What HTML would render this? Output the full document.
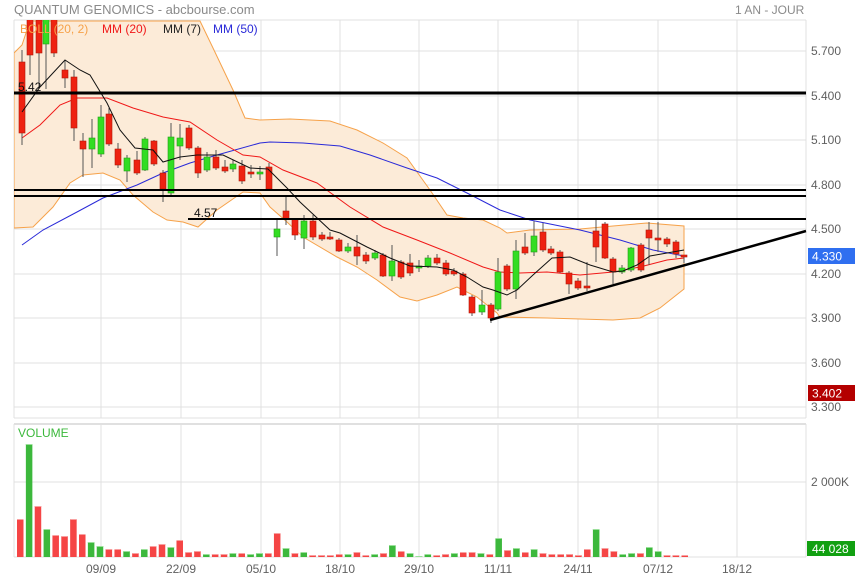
<!DOCTYPE html>
<html><head><meta charset="utf-8"><style>
html,body{margin:0;padding:0;background:#fff;}
body{width:855px;height:579px;overflow:hidden;font-family:"Liberation Sans",sans-serif;}
svg text{font-family:"Liberation Sans",sans-serif;}
</style></head><body>
<svg id="s" width="855" height="579" xmlns="http://www.w3.org/2000/svg">
<defs><clipPath id="cp"><rect x="14" y="20" width="792" height="398"/></clipPath></defs>
<text x="14" y="14" font-size="13" fill="#8a8a8a">QUANTUM GENOMICS - abcbourse.com</text>
<text x="735" y="14" font-size="12" fill="#8a8a8a">1 AN - JOUR</text>
<g id="grid" stroke="#e0e0e0" stroke-width="1"></g>
<g clip-path="url(#cp)">
<polygon id="band" fill="#fcebd8" stroke="#f6a24a" stroke-width="1"/>
<polyline id="m50" fill="none" stroke="#2a2ad8" stroke-width="1"/>
<polyline id="m20" fill="none" stroke="#f01818" stroke-width="1"/>
<g id="cand"></g>
<polyline id="m7" fill="none" stroke="#111" stroke-width="1"/>
</g>
<line x1="14" y1="93" x2="806" y2="93" stroke="#000" stroke-width="3"/>
<line x1="14" y1="190" x2="806" y2="190" stroke="#000" stroke-width="2"/>
<line x1="14" y1="196" x2="806" y2="196" stroke="#000" stroke-width="2"/>
<line x1="188" y1="219" x2="806" y2="219" stroke="#000" stroke-width="2"/>
<line x1="490" y1="320" x2="806" y2="231" stroke="#000" stroke-width="2.5"/>
<text x="18" y="91" font-size="12" fill="#111">5.42</text>
<text x="194" y="217" font-size="12" fill="#111">4.57</text>
<text x="20" y="33" font-size="12" fill="#f6a24a">BOLL (20, 2)</text>
<text x="102" y="33" font-size="12" fill="#f01818">MM (20)</text>
<text x="163" y="33" font-size="12" fill="#222">MM (7)</text>
<text x="213" y="33" font-size="12" fill="#2a2ad8">MM (50)</text>
<g id="ax" font-size="12" fill="#606060"></g>
<rect x="808" y="248" width="47" height="16" fill="#2f6ff0"/>
<text x="812" y="260.5" font-size="12" fill="#fff">4.330</text>
<rect x="808" y="385" width="47" height="16" fill="#b40000"/>
<text x="812" y="397.5" font-size="12" fill="#fff">3.402</text>
<g id="vol"></g>
<text x="18" y="437" font-size="12" fill="#3cb83c">VOLUME</text>
<text x="811" y="486" font-size="12" fill="#606060">2 000K</text>
<rect x="807" y="541" width="48" height="15" fill="#11a011"/>
<text x="812" y="553" font-size="12" fill="#fff">44 028</text>
<g id="dates" font-size="12" fill="#606060" text-anchor="middle"></g>
</svg>
<script>
var NS="http://www.w3.org/2000/svg";
function el(p,t,a,txt){var e=document.createElementNS(NS,t);for(var k in a)e.setAttribute(k,a[k]);if(txt)e.textContent=txt;document.getElementById(p).appendChild(e);return e;}
var vx=[14,101,181,261,340,419,498,578,658,737,806];
vx.forEach(function(x){el("grid","line",{x1:x,y1:20,x2:x,y2:418});el("grid","line",{x1:x,y1:424,x2:x,y2:557});});
var hy=[51,96,140,185,229,274,318,363,407],lab=["5.700","5.400","5.100","4.800","4.500","4.200","3.900","3.600","3.300"];
hy.forEach(function(y,i){el("grid","line",{x1:14,y1:y,x2:806,y2:y});el("ax","text",{x:811,y:y+4},lab[i]);});
el("grid","line",{x1:14,y1:20,x2:806,y2:20});el("grid","line",{x1:14,y1:418,x2:806,y2:418});
el("grid","line",{x1:14,y1:424,x2:806,y2:424,"stroke-width":2});el("grid","line",{x1:14,y1:482,x2:806,y2:482});el("grid","line",{x1:14,y1:557,x2:806,y2:557});
var dl=[[101,"09/09"],[181,"22/09"],[261,"05/10"],[340,"18/10"],[419,"29/10"],[498,"11/11"],[578,"24/11"],[658,"07/12"],[737,"18/12"]];
dl.forEach(function(d){el("dates","text",{x:d[0],y:573},d[1]);});
function pl(id,s){document.getElementById(id).setAttribute("points",s);}
var up="14,53 22,45 30,21 200,21 213,48 233,90 245,118 260,120 290,119 330,121 357,130 383,143 407,158 430,190 447,215 463,218 483,220 500,228 507,233 530,230 580,229 613,226 647,223 684,226";
var lo="684,289 660,308 640,318 613,320 547,318 500,317 497,313 477,297 457,287 437,295 417,301 400,297 377,280 357,267 337,257 303,237 287,222 270,207 260,193 243,192 217,210 198,227 183,222 167,220 153,212 133,195 120,180 103,173 83,175 70,183 53,207 33,227 14,228";
pl("band",up+" "+lo);
pl("m7","22,112 40,87 65,60 80,70 90,75 107,103 120,130 135,148 153,150 163,162 180,157 197,155 223,155 250,168 268,169 287,188 300,202 330,230 340,233 367,247 390,258 410,266 437,267 453,270 467,277 483,287 493,290 507,295 517,290 533,275 552,258 570,257 590,265 613,272 623,271 637,265 650,256 667,253 684,250");
pl("m20","22,138 40,125 60,105 77,98 107,98 133,108 163,117 190,122 217,140 243,155 260,157 283,170 317,183 350,207 383,227 417,240 450,253 483,267 500,272 520,273 547,272 580,275 613,272 640,267 667,260 684,258");
pl("m50","22,245 43,230 77,212 103,198 137,185 163,173 190,163 217,155 260,143 270,142 303,143 340,146 370,155 407,168 437,178 467,193 500,210 530,220 580,230 620,240 653,250 684,256");
// x, top, bot, wickTop, wickBot, color
var C=[[22,62,133,50,145,"r"],[30,10,55,0,75,"r"],[39,20,53,5,89,"r"],[46,10,44,0,89,"g"],[54,10,53,0,57,"r"],[65,70,78,60,88,"r"],[74,77,128,70,141,"r"],[83,141,149,133,177,"r"],[92,138,149,119,168,"g"],[101,117,154,105,157,"g"],[109,114,144,108,146,"r"],[118,149,165,143,168,"r"],[127,158,171,155,182,"g"],[137,160,173,151,175,"r"],[145,139,170,137,171,"g"],[154,141,164,140,166,"r"],[163,173,189,170,202,"r"],[171,137,193,123,195,"g"],[180,138,146,124,160,"g"],[189,128,148,125,150,"r"],[198,148,173,146,178,"r"],[207,157,170,152,172,"g"],[216,157,168,150,170,"r"],[225,167,171,160,173,"r"],[233,164,169,160,172,"g"],[242,166,181,160,184,"r"],[251,172,174,165,178,"r"],[260,172,174,166,180,"g"],[269,167,189,163,191,"r"],[277,229,237,220,256,"g"],[286,211,219,196,225,"r"],[295,219,235,218,240,"r"],[304,221,238,215,249,"g"],[313,221,237,215,240,"r"],[322,235,239,232,241,"r"],[330,237,239,232,240,"r"],[339,240,251,238,252,"r"],[348,247,251,243,253,"g"],[357,247,256,235,265,"r"],[366,255,261,252,264,"r"],[375,253,258,250,260,"g"],[383,255,276,253,277,"r"],[392,261,276,245,281,"g"],[401,262,277,260,279,"r"],[410,263,273,254,276,"r"],[419,266,268,260,272,"g"],[428,258,266,255,268,"g"],[437,258,263,254,265,"r"],[446,263,274,260,276,"r"],[454,271,274,268,276,"r"],[463,274,295,272,296,"r"],[472,297,313,295,316,"r"],[482,305,312,290,315,"g"],[491,305,318,303,323,"r"],[498,272,309,258,311,"g"],[507,266,289,264,291,"r"],[516,251,289,240,299,"g"],[525,247,253,233,255,"r"],[534,236,252,221,256,"g"],[543,232,250,223,252,"r"],[551,249,253,246,255,"r"],[560,252,272,250,273,"r"],[569,273,284,271,294,"r"],[578,281,288,278,290,"r"],[587,286,288,262,291,"r"],[596,231,247,218,262,"r"],[605,224,258,222,259,"r"],[613,259,272,257,284,"r"],[622,268,272,265,274,"g"],[631,248,270,247,272,"g"],[641,245,270,243,272,"r"],[649,230,238,222,265,"r"],[658,238,240,222,252,"r"],[667,239,244,237,247,"r"],[676,242,254,240,258,"r"],[684,255,257,255,263,"r"]];
C.forEach(function(c){el("cand","line",{x1:c[0],y1:c[3],x2:c[0],y2:c[4],stroke:"#555","stroke-width":1});
el("cand","rect",{x:c[0]-3,y:c[1],width:6,height:Math.max(1.5,c[2]-c[1]),fill:c[5]=="r"?"#ee2211":"#33dd22",stroke:c[5]=="r"?"#b01a0a":"#22a018","stroke-width":0.6});});
var V=[[519,"r"],[444,"g"],[506,"r"],[529,"g"],[535,"r"],[536,"r"],[519,"r"],[534,"r"],[542,"g"],[546,"g"],[549,"r"],[549,"r"],[551,"g"],[553,"r"],[549,"g"],[546,"r"],[544,"r"],[547,"g"],[540,"r"],[552,"r"],[551,"r"],[554,"g"],[554,"r"],[554,"r"],[553,"g"],[553,"r"],[554,"g"],[553,"g"],[553,"r"],[533,"r"],[548,"g"],[553,"r"],[552,"g"],[555,"r"],[555,"r"],[555,"r"],[554,"r"],[554,"g"],[552,"r"],[555,"r"],[554,"g"],[553,"r"],[545,"g"],[551,"r"],[553,"g"],[556,"g"],[554,"g"],[555,"r"],[554,"r"],[553,"g"],[552,"r"],[552,"r"],[553,"g"],[554,"r"],[538,"g"],[550,"r"],[548,"g"],[552,"r"],[549,"g"],[553,"r"],[554,"r"],[554,"r"],[554,"r"],[555,"r"],[549,"r"],[529,"g"],[548,"r"],[551,"r"],[554,"g"],[553,"g"],[553,"r"],[547,"g"],[551,"g"],[555,"r"],[555,"r"],[555,"r"]];
V.forEach(function(v,i){var x=20+i*8.86;el("vol","rect",{x:x-3,y:v[0],width:6.5,height:557-v[0],fill:v[1]=="r"?"#f54545":"#3cb83c"});
el("vol","rect",{x:x-3,y:v[0],width:6.5,height:1,fill:v[1]=="r"?"#f8a0a0":"#9be09b"});});
</script>
</body></html>
